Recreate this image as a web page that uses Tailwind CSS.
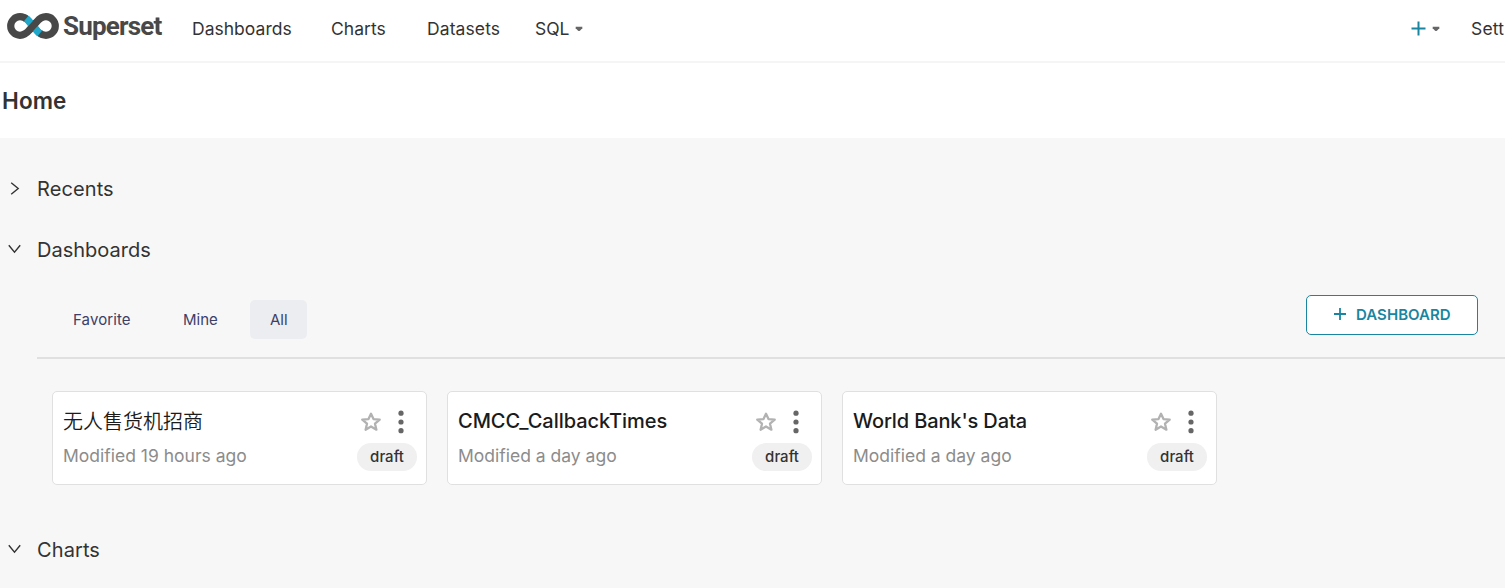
<!DOCTYPE html>
<html lang="en">
<head>
<meta charset="utf-8">
<title>Superset</title>
<script src="https://cdn.jsdelivr.net/npm/@tailwindcss/browser@4"></script>
</head>
<body class="h-[588px] overflow-hidden bg-[#f7f7f7] font-['Inter','Noto_Sans_CJK_SC',sans-serif] text-[#333]">
<svg class="hidden">
  <symbol id="star" viewBox="0 0 20 20"><path d="M10 1.700l2.500 5.400 6.200.5-4.700 4.100 1.400 6-5.400-3.200-5.400 3.200 1.400-6L1.300 7.600l6.200-.5z" fill="none" stroke="#b2b2b2" stroke-width="2.300" stroke-linejoin="round"/></symbol>
  <symbol id="dots" viewBox="0 0 6 24"><circle cx="3" cy="3.200" r="2.600"/><circle cx="3" cy="12" r="2.600"/><circle cx="3" cy="20.700" r="2.600"/></symbol>
  <symbol id="caret" viewBox="0 0 8 6"><path d="M.7.7h6.600v1.500L4.900 4.700q-.9.8-1.800 0L.7 2.200z" fill="#666"/></symbol>
  <symbol id="chev" viewBox="0 0 14 10"><path d="M.8 1.200l5.700 7 5.700-7" fill="none" stroke="#333" stroke-width="1.400"/></symbol>
</svg>

<header class="flex h-[63px] w-[1505px] overflow-hidden border-b-2 border-[#f5f5f5] bg-white text-[17.5px] leading-[57px] whitespace-nowrap">
  <a class="flex w-48 shrink-0 pt-[13px] pl-[7px]">
    <svg class="h-[26px] w-[52px] shrink-0" viewBox="0 0 52 26" fill="none" stroke-width="7.200">
      <path d="M17 4.500Q19.500 5.500 21.600 7.800L30.400 18.200Q32.500 20.500 35 21.500" stroke="#20a7c9"/>
      <path d="M20 6.400C17.800 4.500 15.500 3.700 13 3.700a9.300 9.300 0 0 0 0 18.600c4 0 6.500-1.800 9.300-5.100l7.400-8.400C32.500 5.500 35 3.700 39 3.700a9.300 9.300 0 0 1 0 18.600c-2.500 0-4.800-.8-7-2.700" stroke="#484848"/>
      <path d="M19.200 5.600q1.200 1 2.400 2.300l2.300 2.700M28.100 15.400l2.300 2.700q1.200 1.300 2.400 2.300" stroke="#20a7c9"/>
      <path d="M22.300 17.200l7.400-8.400" stroke="#484848" stroke-width="6.800"/>
    </svg>
    <span class="ml-[4px] font-['Roboto'] text-[26px] leading-[27px] font-bold tracking-[-0.8px] text-[#484848]">Superset</span>
  </a>
  <a class="w-[139px] shrink-0 tracking-[0.02px]">Dashboards</a>
  <a class="w-[96px] shrink-0 tracking-[0.05px]">Charts</a>
  <a class="w-[108px] shrink-0 tracking-[0.1px]">Datasets</a>
  <a class="flex shrink-0 items-start">SQL<svg class="mt-[26px] ml-[5px] h-[6px] w-[8px]"><use href="#caret"/></svg></a>
  <div class="ml-auto flex w-[94px] shrink-0">
    <svg class="mt-[21px] h-[15px] w-[15px] shrink-0" viewBox="0 0 15 15"><path d="M7.500.5v14M.5 7.500h14" stroke="#1985a0" stroke-width="2"/></svg>
    <svg class="mt-[26px] ml-[6px] h-[6px] w-[8px] shrink-0"><use href="#caret"/></svg>
    <span class="ml-[31px] shrink-0 tracking-[0.2px]">Sett</span>
  </div>
</header>

<div class="flex h-[75px] items-center bg-white pl-[2px]"><h1 class="text-[22.5px] font-semibold tracking-[0.1px]">Home</h1></div>

<main>
  <h2 class="mt-[20px] flex h-[61px] items-center text-[20px] tracking-[0.1px]"><span class="flex w-[37px] pl-[8px]"><svg class="mb-[2px] h-[10px] w-[14px] -rotate-90"><use href="#chev"/></svg></span>Recents</h2>
  <h2 class="flex h-[61px] items-center text-[20px]"><span class="flex w-[37px] pl-[8px]"><svg class="mb-[2px] h-[10px] w-[14px]"><use href="#chev"/></svg></span>Dashboards</h2>

  <section class="ml-[37px]">
    <div class="flex h-[79px] items-start justify-between border-b-2 border-[#e0e0e0] pt-[15px] pr-[27px]">
      <div class="mt-[5px] ml-4 flex text-[15px] leading-[39px] text-[#3c4067]">
        <a class="w-[110px] pl-5 tracking-[0.1px]">Favorite</a>
        <a class="w-[87px] pl-5">Mine</a>
        <a class="w-[57px] rounded-[5px] bg-[#ecedf1] pl-5">All</a>
      </div>
      <button class="flex h-[40px] w-[172px] items-center rounded-[5px] border border-[#1985a0] bg-white pl-[27px] text-[15px] font-semibold tracking-[0.05px] text-[#1985a0]">
        <svg class="mr-[10px] mb-[2px] h-[12px] w-[12px]" viewBox="0 0 12 12"><path d="M6 0v12M0 6h12" stroke="#1985a0" stroke-width="1.800"/></svg>DASHBOARD
      </button>
    </div>

    <div class="mt-8 ml-[15px] flex gap-5">
      <article class="flex h-[94px] w-[375px] justify-between rounded-[5px] border border-[#e0e0e0] bg-white pr-[9px] pl-[10px]">
        <div><h3 class="mt-[15px] text-[20px] leading-[30px] font-[350] text-[#1b1b1b]">无人售货机招商</h3><p class="mt-[5px] text-[17.5px] leading-[28px] text-[#8c8c8c]">Modified 19 hours ago</p></div>
        <div class="w-[60px]">
          <div class="mt-[18px] flex"><svg class="mt-[2px] ml-[4px] h-[20px] w-[20px]"><use href="#star"/></svg><svg class="ml-[17px] h-[24px] w-[6px] fill-[#666]"><use href="#dots"/></svg></div>
          <span class="mt-[9px] block h-7 rounded-full bg-[#f0f0f0] text-center text-[15px] leading-[27px] font-medium">draft</span>
        </div>
      </article>
      <article class="flex h-[94px] w-[375px] justify-between rounded-[5px] border border-[#e0e0e0] bg-white pr-[9px] pl-[10px]">
        <div><h3 class="mt-[14px] text-[20px] leading-[30px] font-medium tracking-[-0.04px] text-[#1b1b1b]">CMCC_CallbackTimes</h3><p class="mt-[6px] text-[17.5px] leading-[28px] text-[#8c8c8c]">Modified a day ago</p></div>
        <div class="w-[60px]">
          <div class="mt-[18px] flex"><svg class="mt-[2px] ml-[4px] h-[20px] w-[20px]"><use href="#star"/></svg><svg class="ml-[17px] h-[24px] w-[6px] fill-[#666]"><use href="#dots"/></svg></div>
          <span class="mt-[9px] block h-7 rounded-full bg-[#f0f0f0] text-center text-[15px] leading-[27px] font-medium">draft</span>
        </div>
      </article>
      <article class="flex h-[94px] w-[375px] justify-between rounded-[5px] border border-[#e0e0e0] bg-white pr-[9px] pl-[10px]">
        <div><h3 class="mt-[14px] text-[20px] leading-[30px] font-medium tracking-[-0.12px] text-[#1b1b1b]">World Bank's Data</h3><p class="mt-[6px] text-[17.5px] leading-[28px] text-[#8c8c8c]">Modified a day ago</p></div>
        <div class="w-[60px]">
          <div class="mt-[18px] flex"><svg class="mt-[2px] ml-[4px] h-[20px] w-[20px]"><use href="#star"/></svg><svg class="ml-[17px] h-[24px] w-[6px] fill-[#666]"><use href="#dots"/></svg></div>
          <span class="mt-[9px] block h-7 rounded-full bg-[#f0f0f0] text-center text-[15px] leading-[27px] font-medium">draft</span>
        </div>
      </article>
    </div>
  </section>

  <h2 class="mt-[34px] flex h-[61px] items-center text-[20px] tracking-[0.1px]"><span class="flex w-[37px] pl-[8px]"><svg class="mb-[2px] h-[10px] w-[14px]"><use href="#chev"/></svg></span>Charts</h2>
</main>
</body>
</html>
